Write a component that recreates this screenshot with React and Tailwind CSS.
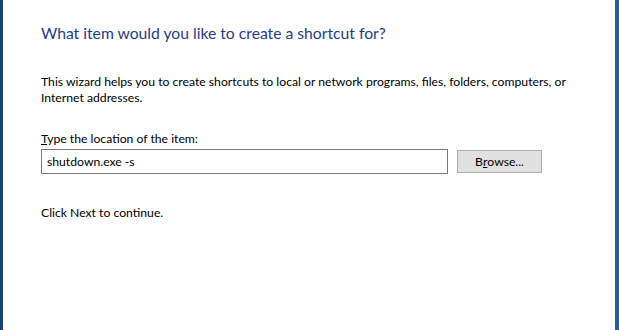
export default function App() {
  return (
    <div className="w-[619px] h-[330px] bg-white flex border-l-[3px] border-l-[#1d4566] border-r-[4px] border-r-[#1562a6] overflow-hidden" style={{ fontFamily: 'Lato, "Noto Sans", sans-serif' }}>
      <div className="flex flex-col pl-[38px] pt-[22px] text-[12.2px] leading-[16px] text-black">
        <h1 className="text-[15.7px] leading-[22px] text-[#1f3d87] whitespace-nowrap">What item would you like to create a shortcut for?</h1>
        <p className="mt-[30px] whitespace-nowrap">
          This wizard helps you to create shortcuts to local or network programs, files, folders, computers, or
          <br />
          Internet addresses.
        </p>
        <label className="mt-[25px]"><span className="underline">T</span>ype the location of the item:</label>
        <div className="mt-[2px] flex items-center gap-[9px]">
          <div className="w-[407px] h-[25px] border border-[#7a7a7a] flex items-center px-[5px]">shutdown.exe -s</div>
          <div className="w-[85px] h-[23px] bg-[#e1e1e1] border border-[#adadad] flex items-center justify-center">B<span className="underline">r</span>owse...</div>
        </div>
        <p className="mt-[31px]">Click Next to continue.</p>
      </div>
    </div>
  );
}
